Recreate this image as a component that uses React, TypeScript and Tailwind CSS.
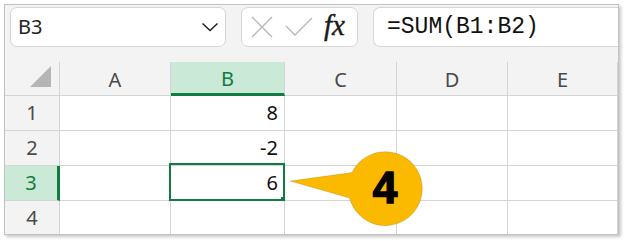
import React from "react";

const COLS = ["A", "B", "C", "D", "E"];

const values: Record<number, string> = { 1: "8", 2: "-2", 3: "6" };

function ColHeader({ label }: { label: string }) {
  const active = label === "B";
  return (
    <div
      className={
        active
          ? "flex items-center justify-center bg-[#cae9d6] text-[#107c41] border-r border-r-[#d4d4d4] border-b-[3px] border-b-[#107c41]"
          : "flex items-center justify-center text-[#4a4a4a] border-r border-b border-[#d4d4d4]"
      }
    >
      <span className="text-[20px] leading-none pt-[2px]">{label}</span>
    </div>
  );
}

function RowHeader({ n }: { n: number }) {
  const active = n === 3;
  return (
    <div
      className={
        active
          ? "flex items-center justify-center bg-[#cae9d6] text-[#107c41] border-b border-b-[#d4d4d4] border-r-[3px] border-r-[#107c41]"
          : "flex items-center justify-center text-[#4a4a4a] border-r border-b border-[#d4d4d4]"
      }
    >
      <span className="text-[20px] leading-none">{n}</span>
    </div>
  );
}

export default function App() {
  const rows = [1, 2, 3, 4];

  return (
    <div
      className="relative w-[624px] h-[241px] bg-white pt-[4px] pl-[4px]"
      style={{ fontFamily: '"Noto Sans", "Open Sans", sans-serif' }}
    >
      <div className="relative w-[615px] h-[231px] bg-[#f3f3f3] border border-[#c2c2c2] shadow-[2px_2px_3px_rgba(0,0,0,0.22)] overflow-hidden">
        {/* Formula bar */}
        <div className="flex items-start gap-[15px] pl-[5px] pt-[2px] h-[57px]">
          <div className="flex items-center justify-between w-[216px] h-[40px] bg-white border border-[#d6d6d6] rounded-[7px] pl-[7px] pr-[6px]">
            <span className="text-[20px] text-[#222]">B3</span>
            <svg width="18" height="10" viewBox="0 0 18 10" fill="none">
              <path d="M1.5 1.5 L9 8.5 L16.5 1.5" stroke="#222" strokeWidth="1.5" />
            </svg>
          </div>

          <div className="flex items-center w-[117px] h-[40px] bg-white border border-[#d6d6d6] rounded-[7px] pl-[9px] gap-[12px]">
            <svg width="22" height="22" viewBox="0 0 22 22" fill="none">
              <path d="M1 1 L21 21 M21 1 L1 21" stroke="#b8b8b8" strokeWidth="1.4" />
            </svg>
            <svg width="28" height="20" viewBox="0 0 28 20" fill="none">
              <path d="M1 9 L10 18 L27 1" stroke="#b8b8b8" strokeWidth="1.4" />
            </svg>
            <span
              className="text-[29px] italic text-[#1a1a1a] leading-none -ml-[1px] pb-[3px] [-webkit-text-stroke:0.4px_#1a1a1a]"
              style={{ fontFamily: '"Liberation Serif", serif' }}
            >
              fx
            </span>
          </div>

          <div className="flex-1 flex items-center h-[40px] bg-white border border-r-0 border-[#d6d6d6] rounded-l-[7px] pl-[13px]">
            <span
              className="text-[23px] text-[#111] leading-none"
              style={{ fontFamily: '"Liberation Mono", "DejaVu Sans Mono", monospace' }}
            >
              =SUM(B1:B2)
            </span>
          </div>
        </div>

        {/* Sheet grid */}
        <div className="grid grid-cols-[55px_111px_114px_112px_111px_1fr] grid-rows-[34px_35px_35px_35px_35px]">
          <div className="relative border-r border-b border-[#d4d4d4]">
            <svg className="absolute left-[25px] top-[4px]" width="21" height="21" viewBox="0 0 21 21">
              <path d="M21 0 L21 21 L0 21 Z" fill="#b5b5b5" />
            </svg>
          </div>
          {COLS.map((c) => (
            <ColHeader key={c} label={c} />
          ))}

          {rows.map((r) => (
            <React.Fragment key={r}>
              <RowHeader n={r} />
              {COLS.map((c) => (
                <div
                  key={c}
                  className="relative flex items-center justify-end bg-white border-r border-b border-[#d4d4d4] pr-[6px]"
                >
                  {c === "B" && values[r] && (
                    <span className="text-[20px] text-[#111] leading-none">{values[r]}</span>
                  )}
                  {c === "B" && r === 3 && (
                    <>
                      <div className="absolute top-[-3px] left-[-2px] right-[-1px] bottom-[-1px] border-2 border-[#107c41]" />
                      <div className="absolute right-[-4px] bottom-[-4px] w-[7px] h-[7px] bg-[#107c41]" />
                    </>
                  )}
                </div>
              ))}
            </React.Fragment>
          ))}
        </div>
      </div>

      {/* Callout */}
      <svg
        className="absolute left-0 top-0 pointer-events-none"
        width="624"
        height="241"
        viewBox="0 0 624 241"
      >
        <path
          d="M290 181 L352 172.5 A37 37 0 1 1 349.5 198 Z"
          fill="#fbb900"
          stroke="rgba(0,0,0,0.12)"
          strokeWidth="1"
        />
      </svg>
      <div
        className="absolute left-[348px] top-[151px] w-[74px] h-[74px] flex items-center justify-center text-[44px] font-bold text-black leading-none [-webkit-text-stroke:1.5px_#000]"
        style={{ fontFamily: '"Liberation Sans", Arial, sans-serif' }}
      >
        4
      </div>
    </div>
  );
}
